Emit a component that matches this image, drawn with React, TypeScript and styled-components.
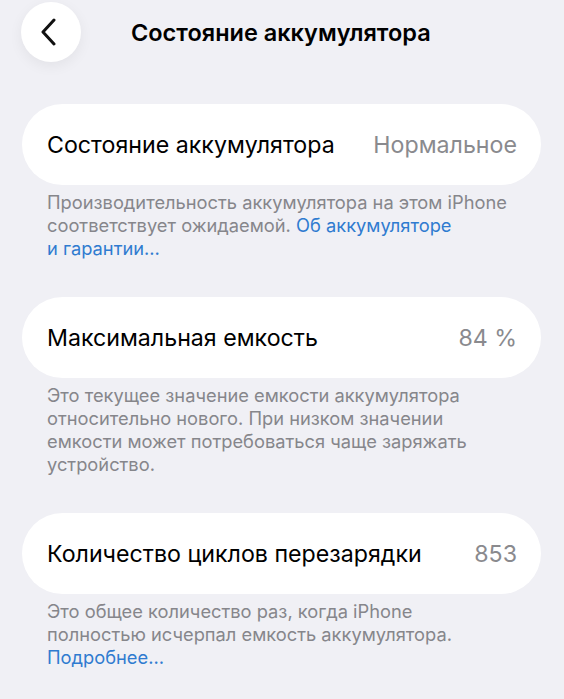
import React from "react"
import styled, { createGlobalStyle } from "styled-components"

type Section = {
    label: string;
    value: string;
    note: React.ReactNode;
}

const Link = styled.span`
    color: #2f7bd0;
`

const sections: Section[] = [
    {
        label: "Состояние аккумулятора",
        value: "Нормальное",
        note: (
            <>
                Производительность аккумулятора на этом iPhone<br />
                соответствует ожидаемой. <Link>Об аккумуляторе<br />и гарантии…</Link>
            </>
        ),
    },
    {
        label: "Максимальная емкость",
        value: "84 %",
        note: (
            <>
                Это текущее значение емкости аккумулятора<br />
                относительно нового. При низком значении<br />
                емкости может потребоваться чаще заряжать<br />
                устройство.
            </>
        ),
    },
    {
        label: "Количество циклов перезарядки",
        value: "853",
        note: (
            <>
                Это общее количество раз, когда iPhone<br />
                полностью исчерпал емкость аккумулятора.<br />
                <Link>Подробнее…</Link>
            </>
        ),
    },
]

const App: React.FC = () => {
    return (
        <Page>
            <GlobalStyle />
            <Header>
                <BackButton aria-label="Назад">
                    <svg width="18" height="28" viewBox="0 0 18 28" fill="none">
                        <path d="M14 2 L3 14 L14 26" stroke="#111" strokeWidth="3" strokeLinecap="round" strokeLinejoin="round" />
                    </svg>
                </BackButton>
                <Title>Состояние аккумулятора</Title>
            </Header>
            {sections.map(s => (
                <Group key={s.label}>
                    <Card>
                        <Label>{s.label}</Label>
                        <Value>{s.value}</Value>
                    </Card>
                    <Note>{s.note}</Note>
                </Group>
            ))}
        </Page>
    )
}

const GlobalStyle = createGlobalStyle`
    html, body {
        margin: 0;
        padding: 0;
        background: #f0f0f5;
    }
    body {
        font-family: Inter, "Noto Sans", "Liberation Sans", sans-serif;
        -webkit-font-smoothing: antialiased;
    }
`

const Page = styled.div`
    width: 564px;
    height: 699px;
    overflow: hidden;
    background: #f0f0f5;
    padding: 2px 23px 0 21px;
    box-sizing: border-box;
`

const Header = styled.div`
    display: flex;
    align-items: center;
    height: 60px;
    gap: 50px;
    margin-bottom: 42px;
`

const BackButton = styled.button`
    width: 60px;
    height: 60px;
    border-radius: 50%;
    border: none;
    background: #fff;
    box-shadow: 0 4px 14px rgba(0, 0, 0, 0.06);
    display: flex;
    align-items: center;
    justify-content: center;
    padding: 0 4px 0 0;
    flex-shrink: 0;
`

const Title = styled.h1`
    margin: 0;
    font-size: 23.5px;
    font-weight: 600;
    color: #000;
`

const Group = styled.section`
    margin-bottom: 37px;
`

const Card = styled.div`
    display: flex;
    align-items: center;
    justify-content: space-between;
    height: 81px;
    border-radius: 41px;
    background: #fff;
    margin-left: 1px;
    padding: 0 24px 0 25px;
    font-size: 23.2px;
`

const Label = styled.span`
    color: #000;
`

const Value = styled.span`
    color: #8a8a8e;
`

const Note = styled.p`
    margin: 6px 0 0;
    padding: 0 10px 0 26px;
    font-size: 18.3px;
    line-height: 23px;
    color: #86868b;
    white-space: nowrap;
`

export default App
